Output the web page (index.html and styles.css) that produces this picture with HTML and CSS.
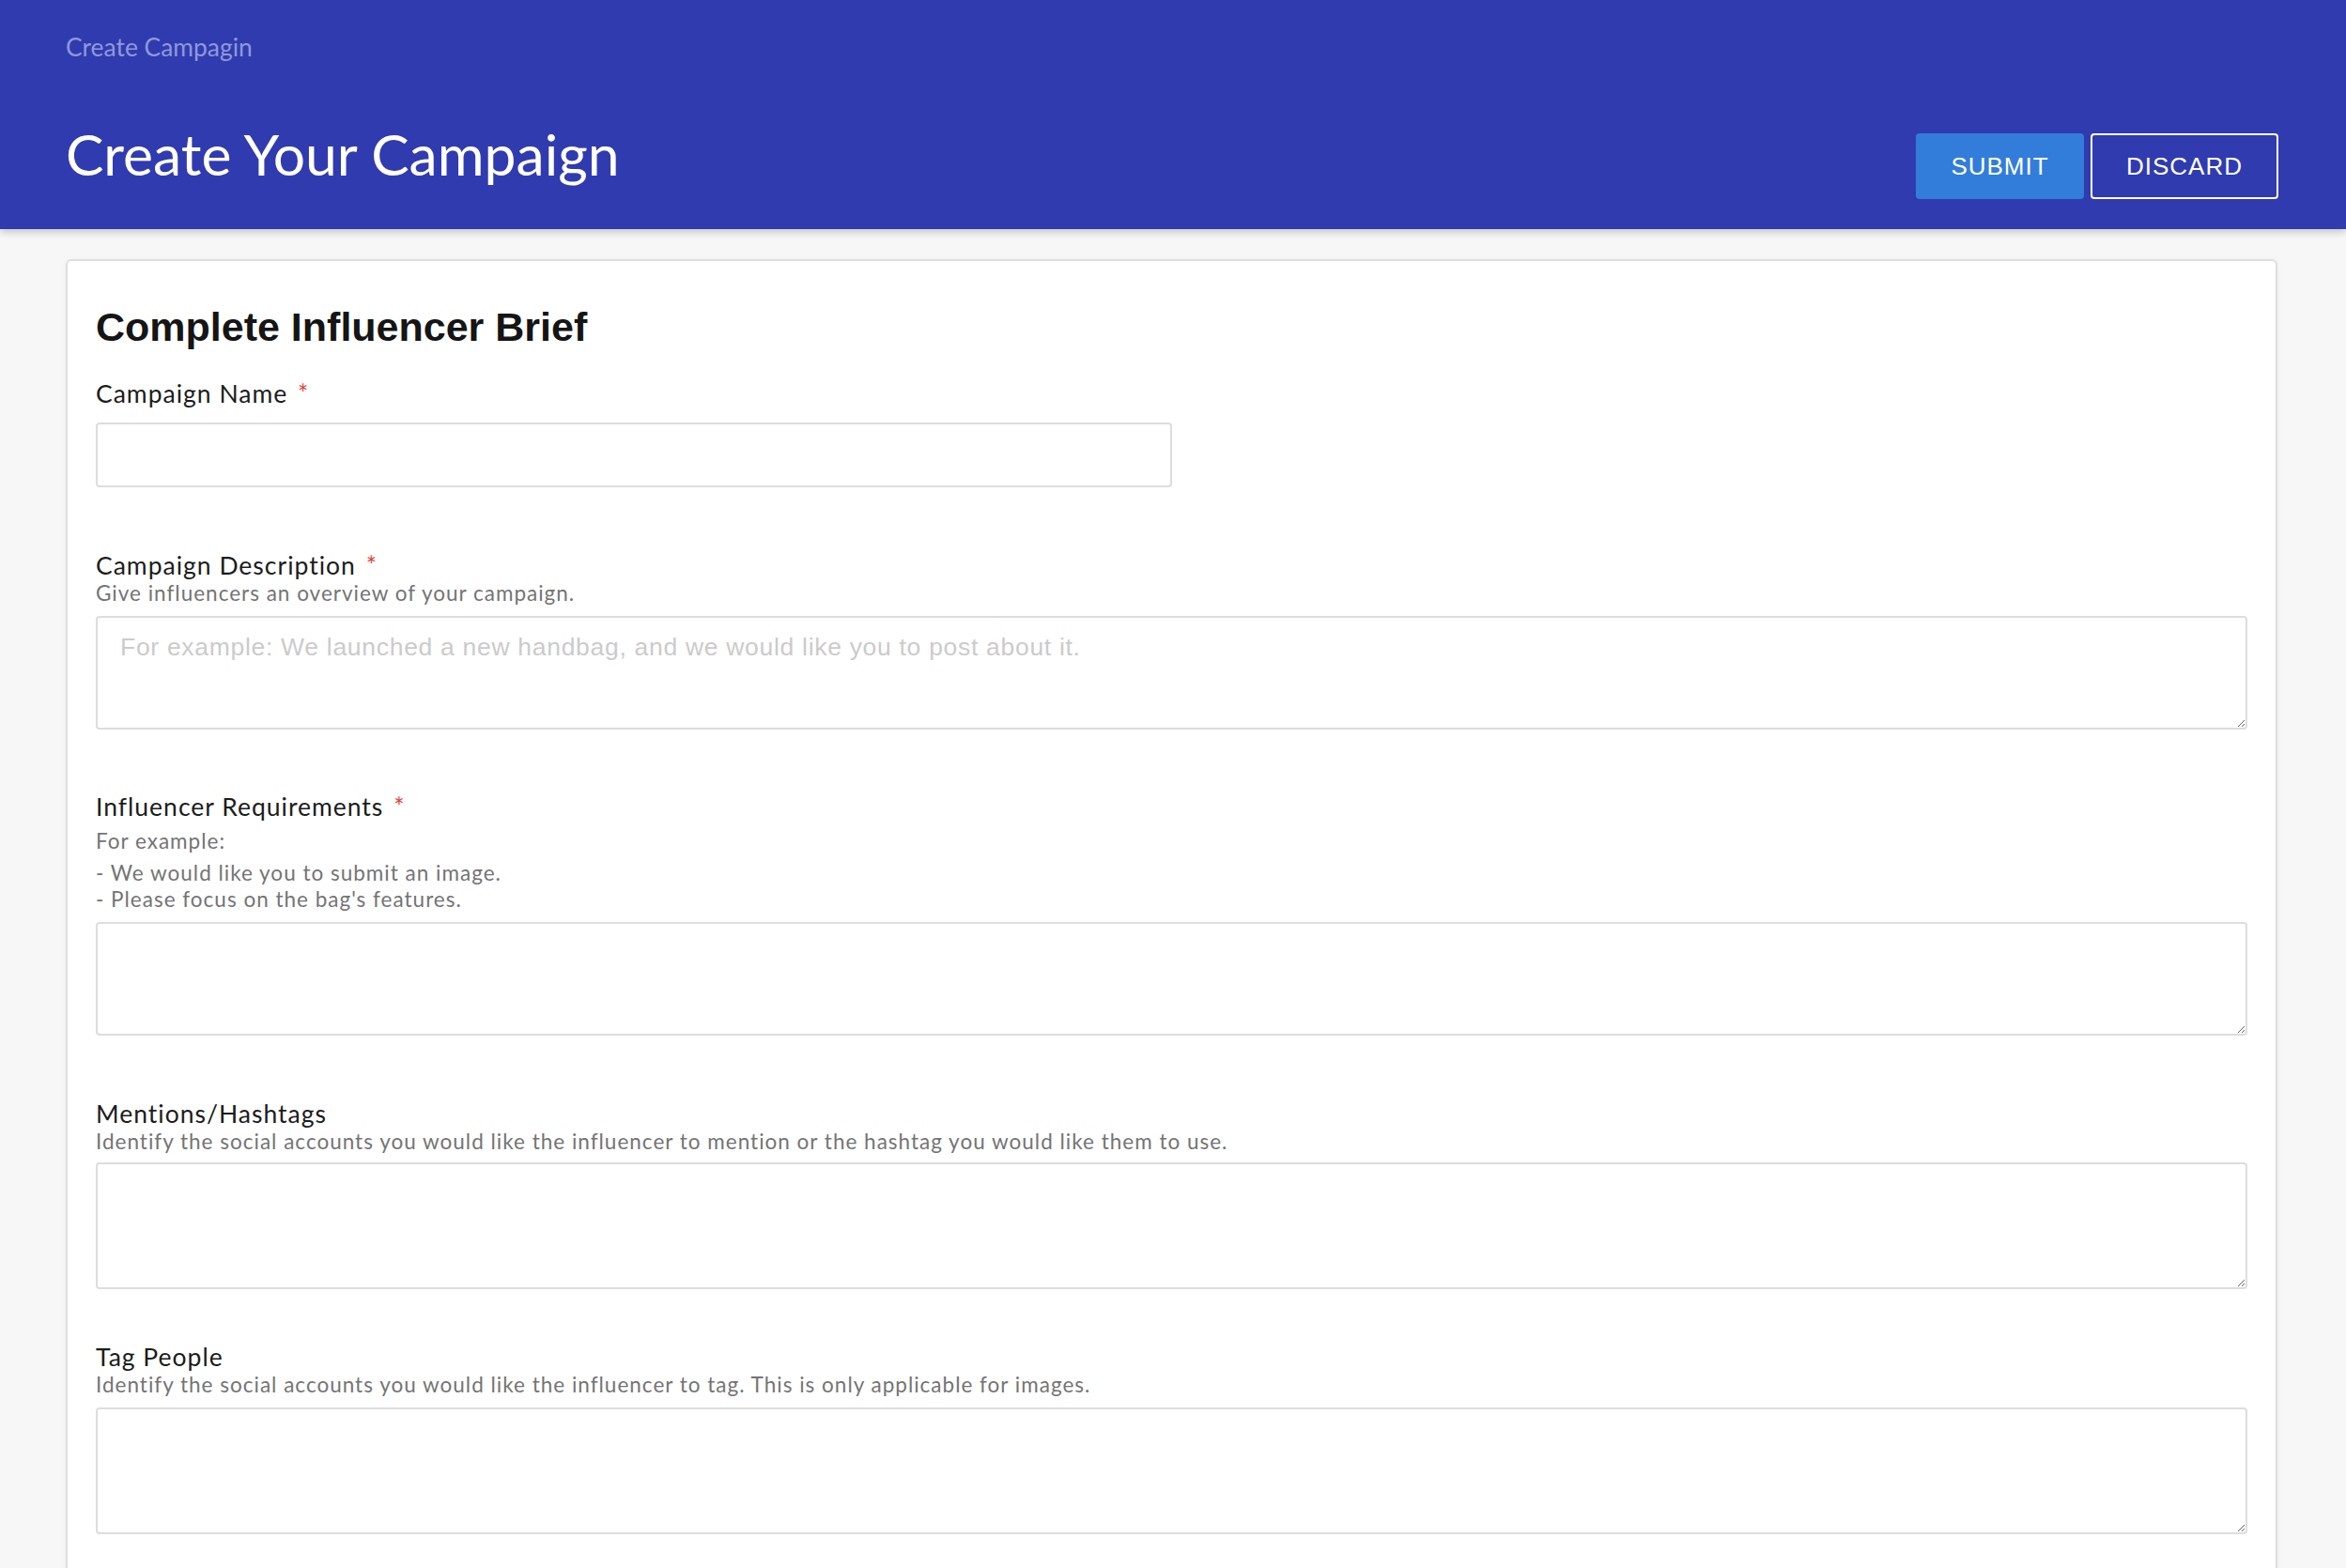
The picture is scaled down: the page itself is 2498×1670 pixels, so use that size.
FILE: index.html
```html
<!DOCTYPE html>
<html lang="en">
<head>
<meta charset="utf-8">
<title>Create Your Campaign</title>
<link rel="stylesheet" href="styles.css">
</head>
<body>
<header class="topbar">
  <div class="crumb">Create Campagin</div>
  <div class="title-row">
    <h1 class="page-title">Create Your Campaign</h1>
    <div class="actions">
      <button class="btn btn-primary" type="button">SUBMIT</button>
      <button class="btn btn-outline" type="button">DISCARD</button>
    </div>
  </div>
</header>
<main class="content">
  <section class="card">
    <h2 class="card-title">Complete Influencer Brief</h2>

    <div class="field field-name">
      <label class="label">Campaign Name <span class="req">*</span></label>
      <input class="input" type="text">
    </div>

    <div class="field field-desc">
      <label class="label">Campaign Description <span class="req">*</span></label>
      <div class="hint">Give influencers an overview of your campaign.</div>
      <textarea class="textarea ta-120" placeholder="For example: We launched a new handbag, and we would like you to post about it."></textarea>
    </div>

    <div class="field field-req">
      <label class="label">Influencer Requirements <span class="req">*</span></label>
      <div class="hint hint-gap">For example:</div>
      <div class="hint hint-list">- We would like you to submit an image.<br>- Please focus on the bag's features.</div>
      <textarea class="textarea ta-120"></textarea>
    </div>

    <div class="field field-mentions">
      <label class="label">Mentions/Hashtags</label>
      <div class="hint">Identify the social accounts you would like the influencer to mention or the hashtag you would like them to use.</div>
      <textarea class="textarea ta-135 ta-tight"></textarea>
    </div>

    <div class="field field-tag">
      <label class="label">Tag People</label>
      <div class="hint">Identify the social accounts you would like the influencer to tag. This is only applicable for images.</div>
      <textarea class="textarea ta-134"></textarea>
    </div>
  </section>
</main>
</body>
</html>
```

FILE: styles.css
```css
* { box-sizing: border-box; }

html, body {
  margin: 0;
  padding: 0;
}

body {
  background: #f7f7f7;
  font-family: Lato, "Open Sans", "Liberation Sans", sans-serif;
  color: #1c1c1c;
}

.topbar {
  background: #303bb0;
  height: 244px;
  padding: 34px 72px 0 70px;
  box-shadow: 0 3px 8px rgba(0, 0, 0, 0.22);
  position: relative;
  z-index: 1;
}

.crumb {
  font-family: Lato, sans-serif;
  font-size: 26.4px;
  line-height: 32px;
  color: #8f99d8;
}

.title-row {
  display: flex;
  justify-content: space-between;
  align-items: flex-start;
  margin-top: 62px;
}

.page-title {
  margin: 0;
  font-family: Lato, sans-serif;
  font-weight: 400;
  font-size: 60.6px;
  line-height: 72px;
  color: #ffffff;
}

.actions {
  display: flex;
  gap: 7px;
  margin-top: 14px;
}

.btn {
  height: 70px;
  font-family: "Liberation Sans", Arial, sans-serif;
  font-size: 26px;
  letter-spacing: 1px;
  color: #ffffff;
  border-radius: 4px;
  cursor: pointer;
}

.btn-primary {
  width: 179px;
  background: #327dda;
  border: none;
}

.btn-outline {
  width: 200px;
  background: transparent;
  border: 2px solid #ffffff;
}

.content {
  padding: 32px 73px 40px 70px;
}

.card {
  background: #ffffff;
  border: 2px solid #dedede;
  border-radius: 6px;
  padding: 45px 30px 60px 30px;
  box-shadow: 0 1px 6px rgba(0, 0, 0, 0.04);
}

.card-title {
  margin: 0 0 30px 0;
  font-family: "Liberation Sans", Arial, sans-serif;
  font-weight: 700;
  font-size: 43px;
  line-height: 50px;
  color: #151515;
}

.field {
  display: flex;
  flex-direction: column;
  align-items: flex-start;
}

.field + .field {
  margin-top: 67px;
}

.field-req {
  margin-top: 66px !important;
}

.field-tag {
  margin-top: 56px !important;
}

.label {
  font-family: Lato, sans-serif;
  font-size: 26.5px;
  letter-spacing: 1px;
  line-height: 32px;
  color: #1c1c1c;
}

.req {
  color: #e8403a;
  margin-left: 3px;
}

.hint {
  font-family: Lato, sans-serif;
  font-size: 22.5px;
  letter-spacing: 1px;
  line-height: 28px;
  color: #747474;
}

.hint-gap {
  margin-top: 7px;
  margin-bottom: 6px;
}

.input {
  display: block;
  margin-top: 15px;
  width: 1146px;
  height: 69px;
  border: 2px solid #dddddd;
  border-radius: 4px;
  background: #ffffff;
  font-family: "Liberation Sans", Arial, sans-serif;
  font-size: 26px;
  padding: 0 24px;
  outline: none;
}

.textarea {
  display: block;
  margin-top: 10px;
  width: 100%;
  border: 2px solid #dddddd;
  border-radius: 4px;
  background: #ffffff;
  font-family: "Liberation Sans", Arial, sans-serif;
  font-size: 26.5px;
  letter-spacing: 0.7px;
  line-height: 31px;
  padding: 16px 24px;
  color: #333333;
  outline: none;
}

.textarea::placeholder {
  color: #cbcbcb;
}

.ta-120 { height: 121px; }
.ta-135 { height: 135px; }
.ta-134 { height: 135px; }
.ta-tight { margin-top: 8px; }
```
